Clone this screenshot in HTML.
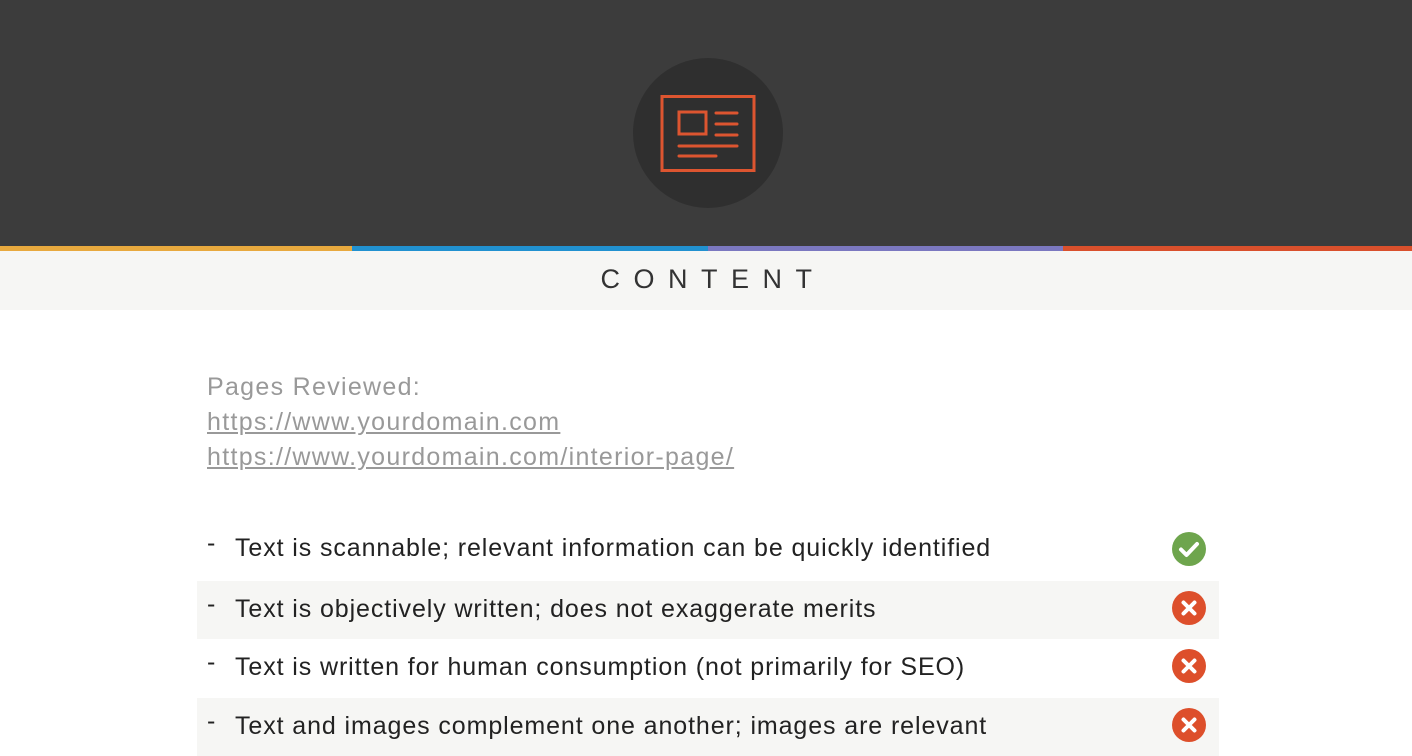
<!DOCTYPE html>
<html><head><style>
body{margin:0;width:1412px;height:745px;overflow:hidden;background:#fff;font-family:"Liberation Sans",sans-serif}
.hdr{position:absolute;left:0;top:0;width:1412px;height:246px;background:#3c3c3c}
.bar{position:absolute;top:246px;height:5px}
.band{position:absolute;top:251px;left:0;width:1412px;height:59px;background:#f6f6f4}
.title{position:absolute;top:264px;left:0;width:1412px;text-align:center;font-size:27px;letter-spacing:13.5px;color:#333;padding-left:14px;box-sizing:border-box}
.pages{position:absolute;left:207px;top:370px;font-size:25px;line-height:35px;color:#999;letter-spacing:1.3px}
.pages u{color:#999}
.row{position:absolute;left:197px;width:1022px;height:58px}
.row.g{background:#f6f6f4}
.row span{position:absolute;left:38px;top:14px;font-size:25px;color:#222;letter-spacing:0.9px}
.row b{position:absolute;left:10px;top:9px;font-size:25px;font-weight:normal;color:#222}
.row svg{position:absolute;left:974px;top:11px}
.row.x svg{top:9px}
</style></head><body>
<div class="hdr"></div>
<svg style="position:absolute;left:0;top:0" width="1412" height="246">
<circle cx="708" cy="133" r="75" fill="#2f2f2f"/>
<g stroke="#dd5530" stroke-width="3" fill="none" stroke-linecap="round">
<rect x="662" y="96.5" width="92" height="74"/>
<rect x="679" y="112" width="27" height="22"/>
<line x1="716" y1="113" x2="737" y2="113"/>
<line x1="716" y1="124" x2="737" y2="124"/>
<line x1="716" y1="135" x2="737" y2="135"/>
<line x1="679" y1="146" x2="737" y2="146"/>
<line x1="679" y1="156" x2="716" y2="156"/>
</g></svg>
<div class="bar" style="left:0;width:352px;background:#e8a93e"></div>
<div class="bar" style="left:352px;width:356px;background:#2191d0"></div>
<div class="bar" style="left:708px;width:355px;background:#7b78c0"></div>
<div class="bar" style="left:1063px;width:349px;background:#d9502c"></div>
<div class="band"></div>
<div class="title">CONTENT</div>
<div class="pages">Pages Reviewed:<br><u>https://www.yourdomain.com</u><br><u>https://www.yourdomain.com/interior-page/</u></div>

<div class="row" style="top:520px"><b>-</b><span>Text is scannable; relevant information can be quickly identified</span>
<svg width="36" height="36"><circle cx="18" cy="18" r="17" fill="#6ea54d"/><path d="M10 18.5l5.5 5.5L26 13" stroke="#fff" stroke-width="4" fill="none" stroke-linecap="round" stroke-linejoin="round"/></svg></div>
<div class="row g x" style="top:581px"><b>-</b><span>Text is objectively written; does not exaggerate merits</span>
<svg width="36" height="36"><circle cx="18" cy="18" r="17" fill="#dd4f2b"/><path d="M12.5 12.5l11 11M23.5 12.5l-11 11" stroke="#fff" stroke-width="4" stroke-linecap="round"/></svg></div>
<div class="row x" style="top:639px"><b>-</b><span>Text is written for human consumption (not primarily for SEO)</span>
<svg width="36" height="36"><circle cx="18" cy="18" r="17" fill="#dd4f2b"/><path d="M12.5 12.5l11 11M23.5 12.5l-11 11" stroke="#fff" stroke-width="4" stroke-linecap="round"/></svg></div>
<div class="row g x" style="top:698px;height:58px"><b>-</b><span>Text and images complement one another; images are relevant</span>
<svg width="36" height="36"><circle cx="18" cy="18" r="17" fill="#dd4f2b"/><path d="M12.5 12.5l11 11M23.5 12.5l-11 11" stroke="#fff" stroke-width="4" stroke-linecap="round"/></svg></div>
</body></html>
